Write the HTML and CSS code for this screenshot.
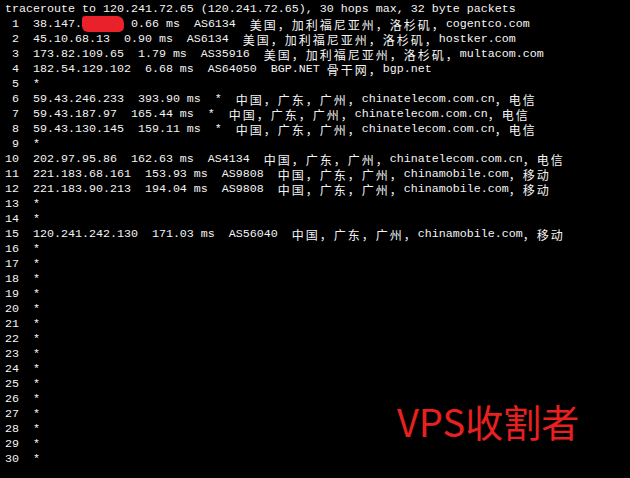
FILE: index.html
```html
<!DOCTYPE html>
<html lang="zh-CN">
<head>
  <meta charset="UTF-8">
  <link rel="stylesheet" href="styles.css">
  <title>traceroute</title>
</head>
<body>
  <div class="screen">
<pre class="term">traceroute to 120.241.72.65 (120.241.72.65), 30 hops max, 32 byte packets
 1  38.147.<span class="mask">xx.xx </span> 0.66 ms  AS6134  <span class="cn">美国，加利福尼亚州，洛杉矶，</span>cogentco.com
 2  45.10.68.13  0.90 ms  AS6134  <span class="cn">美国，加利福尼亚州，洛杉矶，</span>hostker.com
 3  173.82.109.65  1.79 ms  AS35916  <span class="cn">美国，加利福尼亚州，洛杉矶，</span>multacom.com
 4  182.54.129.102  6.68 ms  AS64050  BGP.NET <span class="cn">骨干网，</span>bgp.net
 5  *
 6  59.43.246.233  393.90 ms  *  <span class="cn">中国，广东，广州，</span>chinatelecom.com.cn<span class="cn">，电信</span>
 7  59.43.187.97  165.44 ms  *  <span class="cn">中国，广东，广州，</span>chinatelecom.com.cn<span class="cn">，电信</span>
 8  59.43.130.145  159.11 ms  *  <span class="cn">中国，广东，广州，</span>chinatelecom.com.cn<span class="cn">，电信</span>
 9  *
10  202.97.95.86  162.63 ms  AS4134  <span class="cn">中国，广东，广州，</span>chinatelecom.com.cn<span class="cn">，电信</span>
11  221.183.68.161  153.93 ms  AS9808  <span class="cn">中国，广东，广州，</span>chinamobile.com<span class="cn">，移动</span>
12  221.183.90.213  194.04 ms  AS9808  <span class="cn">中国，广东，广州，</span>chinamobile.com<span class="cn">，移动</span>
13  *
14  *
15  120.241.242.130  171.03 ms  AS56040  <span class="cn">中国，广东，广州，</span>chinamobile.com<span class="cn">，移动</span>
16  *
17  *
18  *
19  *
20  *
21  *
22  *
23  *
24  *
25  *
26  *
27  *
28  *
29  *
30  *</pre>
    <div class="mark">VPS收割者</div>
  </div>
</body>
</html>
```

FILE: styles.css
```css
* {
  margin: 0;
  padding: 0;
  box-sizing: border-box;
}

body {
  background-color: #000;
}

.screen {
  position: relative;
  width: 630px;
  height: 478px;
  background: #000;
  overflow: hidden;
}

.term {
  padding: 2px 0 0 5px;
  font-family: "Liberation Mono", "DejaVu Sans Mono", monospace;
  font-size: 11.67px;
  line-height: 15px;
  color: #f4f4f4;
  white-space: pre;
}

/* wide chars take two cells */
.cn {
  display: inline-block;
  height: 15px;
  line-height: 15px;
  vertical-align: top;
  font-family: "Noto Sans CJK SC", sans-serif;
  font-size: 12px;
  letter-spacing: 2px;
}

.mask {
  color: #e9212b;
  background: #e9212b;
  border-radius: 3px 7px 5px 6px;
  padding: 1px 0;
}

.mark {
  position: absolute;
  left: 397px;
  top: 396px;
  font-family: "Noto Sans CJK SC", sans-serif;
  font-size: 38px;
  line-height: 50px;
  color: #e8201f;
}
```
